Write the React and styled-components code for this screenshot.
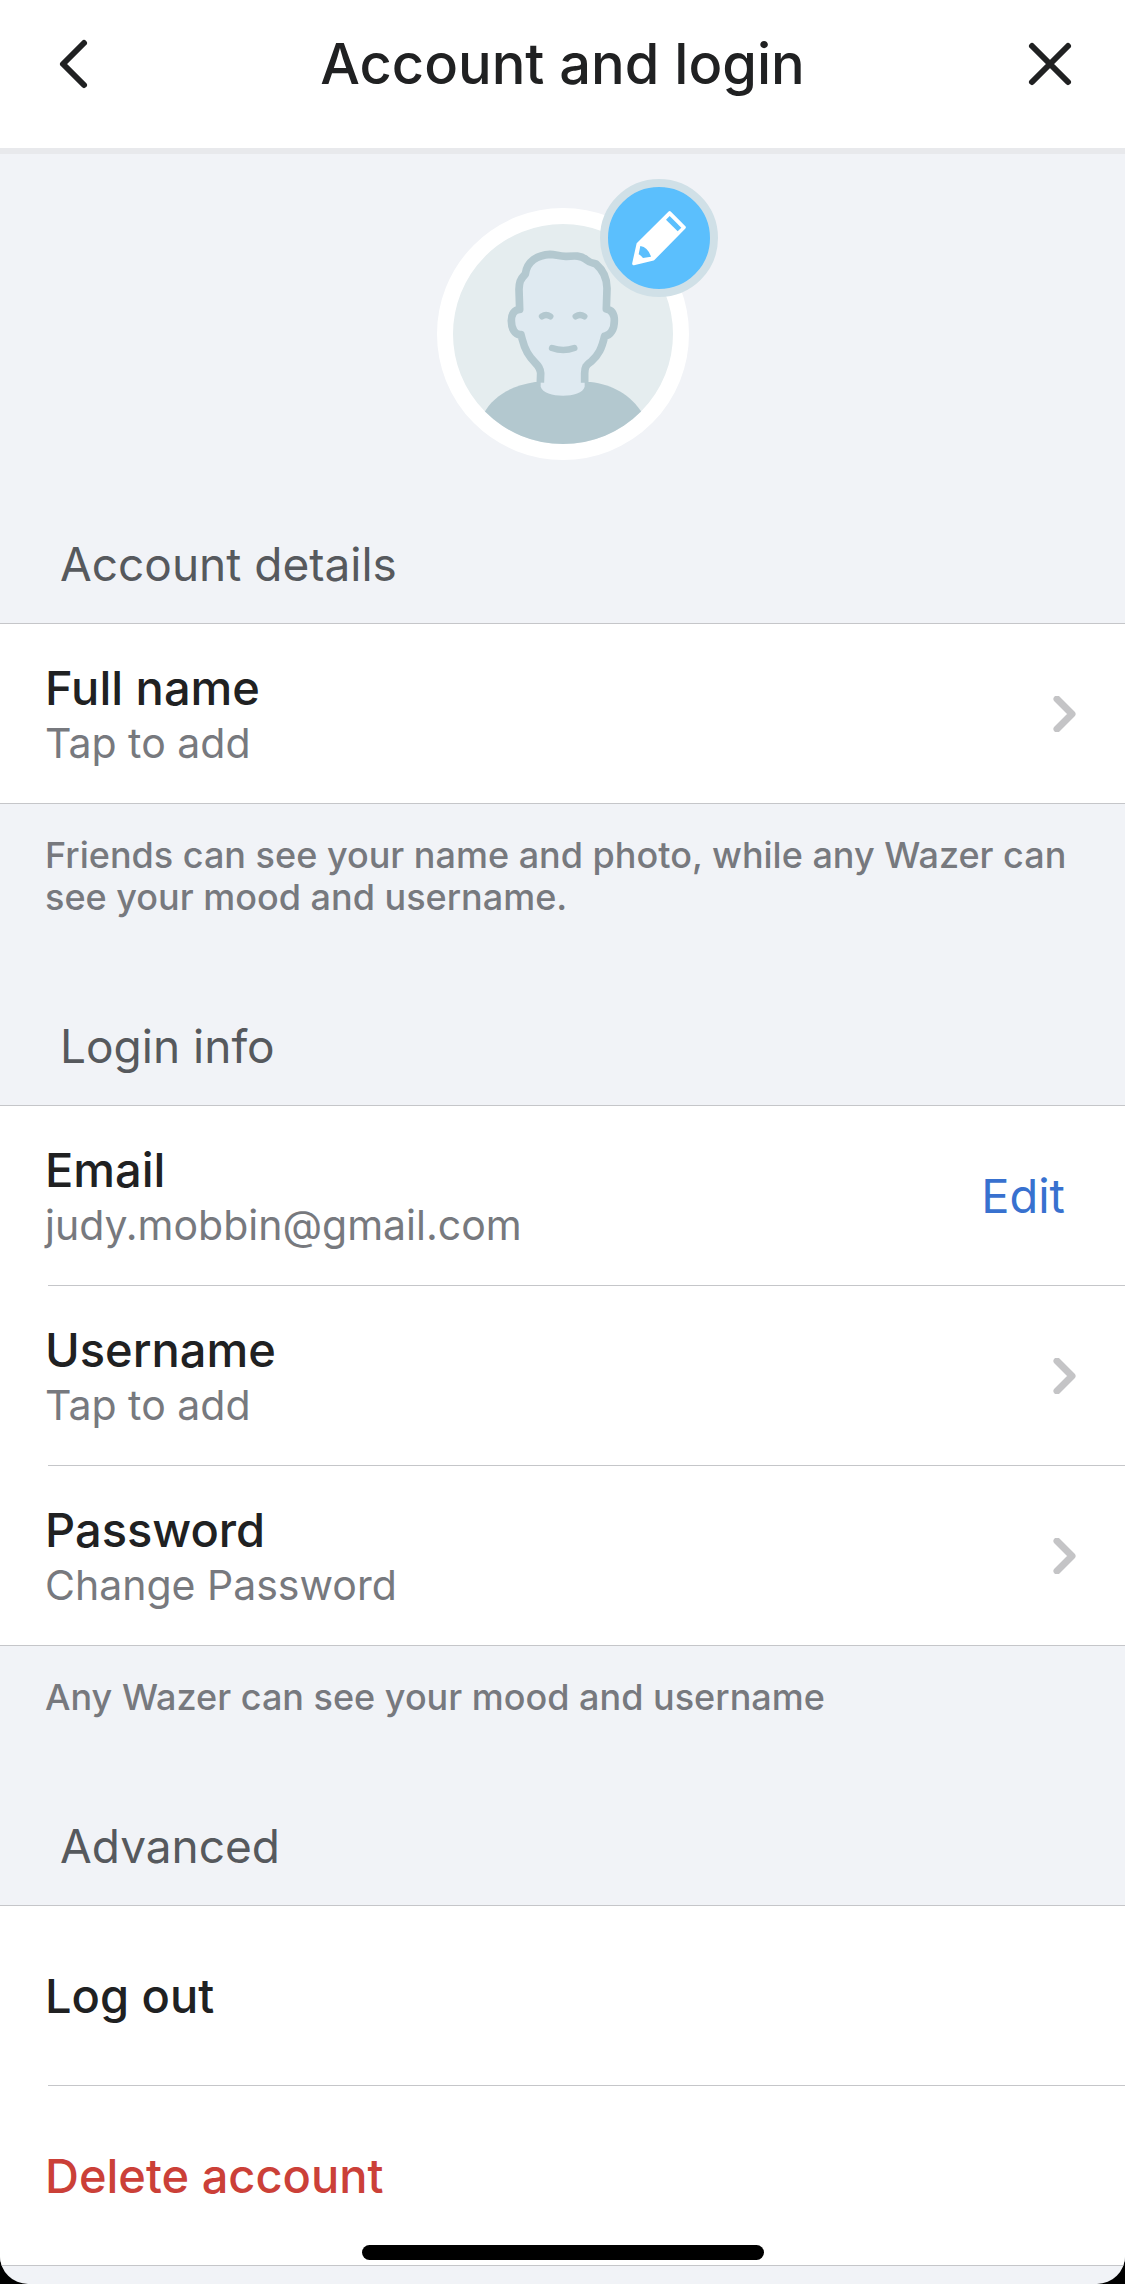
import React from 'react';
import styled, { createGlobalStyle } from 'styled-components';

const GlobalStyle = createGlobalStyle`
  * {
    box-sizing: border-box;
  }
  body {
    margin: 0;
    background-color: #000;
    font-family: Inter, 'Liberation Sans', sans-serif;
    color: #202122;
  }
  button {
    border: 0;
    padding: 0;
    background: none;
    font: inherit;
    color: inherit;
    cursor: pointer;
  }
`;

const Screen = styled.main`
  min-height: 100vh;
  background-color: #f1f3f7;
  border-radius: 0 0 28px 28px;
  overflow: hidden;
`;

const Header = styled.header`
  display: flex;
  align-items: center;
  justify-content: space-between;
  padding: 28px 48px 48px;
  background-color: #fff;
  border-bottom: 6px solid #e8e9ec;
`;

const Title = styled.h1`
  margin: 0;
  font-size: 56px;
  line-height: 72px;
  font-weight: 500;
`;

const IconButton = styled.button`
  display: flex;
  align-items: center;
  justify-content: center;
  width: 54px;
  height: 72px;
`;

const Profile = styled.div`
  display: flex;
  justify-content: center;
  padding-top: 54px;
`;

const Avatar = styled.div`
  position: relative;
  width: 252px;
  height: 252px;
  border: 16px solid #fff;
  border-radius: 50%;
  background-color: #e5edef;

  > svg {
    display: block;
    border-radius: 50%;
  }
`;

const EditPhoto = styled.button`
  position: absolute;
  top: -45px;
  right: -45px;
  width: 118px;
  height: 118px;
  border: 8px solid #d0e0e7;
  border-radius: 50%;
  background-color: #5bbffd;

  svg {
    display: block;
  }
`;

const SectionTitle = styled.h2`
  margin: 0;
  padding: 76px 60px 31px;
  font-size: 46px;
  line-height: 56px;
  font-weight: 400;
  color: #56595d;
`;

const Group = styled.div`
  background-color: #fff;
  border-top: 1px solid #c5c6c9;
  border-bottom: 1px solid #c5c6c9;
`;

const Divider = styled.hr`
  margin: 0 0 0 48px;
  border: 0;
  height: 1px;
  background-color: #c5c6c9;
`;

const Row = styled.div`
  display: flex;
  align-items: center;
  justify-content: space-between;
  width: 100%;
  min-height: 179px;
  padding: 0 44px 0 45px;
  text-align: left;
`;

const RowText = styled.span`
  display: flex;
  flex-direction: column;
  gap: 2px;
`;

const Label = styled.span`
  font-size: 47px;
  line-height: 56px;
  font-weight: 500;
  color: ${(props) => (props.$danger ? '#cb4038' : '#202122')};
`;

const Value = styled.span`
  font-size: 41px;
  line-height: 50px;
  color: #77797e;
`;

const EditButton = styled.button`
  padding-right: 16px;
  font-size: 47px;
  line-height: 56px;
  color: #3871cf;
`;

const Note = styled.p`
  margin: 0;
  padding: 30px 45px 24px;
  font-size: 36px;
  line-height: 42px;
  font-weight: 500;
  color: #77797e;
`;

const HomeIndicator = styled.div`
  position: fixed;
  bottom: 24px;
  left: 50%;
  width: 402px;
  height: 15px;
  margin-left: -201px;
  border-radius: 8px;
  background-color: #000;
`;

const Chevron = () => (
  <svg width="36" height="36" viewBox="0 0 36 36" fill="none" stroke="#c4c4c6" strokeWidth="7" strokeLinecap="round" strokeLinejoin="round">
    <path d="M12 3 27 18 12 33" />
  </svg>
);

const Person = () => (
  <svg width="220" height="220" viewBox="99 192 660 660">
    {/* Shoulders */}
    <path
      d="M190 762C222 704 276 678 345 666H512C575 674 632 702 668 762V860H190Z"
      fill="#b3c8cf"
    />
    {/* Head and neck */}
    <path
      d="M362 680V640C360 612 342 613 322 578C310 556 309 546 303 524C284 526 274 505 274 482C274 463 283 449 299 448L297 388C298 368 299 360 316 342C321 304 352 285 390 283C408 283 418 290 440 289C466 287 482 286 497 298C510 309 516 309 528 312C549 330 561 355 561 385L559 447C576 450 583 463 583 482C583 507 572 527 554 528C545 566 536 585 514 604C498 615 494 622 494 640V680C486 716 372 716 362 680Z"
      fill="#dfeaf1"
    />
    <path
      d="M361 668L362 640C360 612 342 613 322 578C310 556 309 546 303 524C284 526 274 505 274 482C274 463 283 449 299 448L297 388C298 368 299 360 316 342C321 304 352 285 390 283C408 283 418 290 440 289C466 287 482 286 497 298C510 309 516 309 528 312C549 330 561 355 561 385L559 447C576 450 583 463 583 482C583 507 572 527 554 528C545 566 536 585 514 604C498 615 494 622 494 640V668"
      fill="none"
      stroke="#b3c8cf"
      strokeWidth="23"
      strokeLinejoin="round"
    />
    {/* Eyes and mouth */}
    <path
      d="M366 469Q378 461 391 469M467 469Q480 461 493 469M396 564Q430 576 463 564"
      fill="none"
      stroke="#b3c8cf"
      strokeWidth="19"
      strokeLinecap="round"
    />
  </svg>
);

const Pencil = () => (
  <svg width="102" height="102" viewBox="564 81 306 306">
    <path
      d="M641 311 654 252 749 158 793 202 700 297Z"
      fill="#fff"
      stroke="#fff"
      strokeWidth="9"
      strokeLinejoin="round"
    />
    <path d="M749 168 784 203 773 214 738 179Z" fill="#5bbffd" />
    <path d="M661 258Q684 262 693 290L669 294Q663 286 656 283Z" fill="#5bbffd" />
  </svg>
);

const LinkRow = ({ label, value }) => (
  <Row as="button">
    <RowText>
      <Label>{label}</Label>
      <Value>{value}</Value>
    </RowText>
    <Chevron />
  </Row>
);

const App = () => {
  return (
    <>
      <GlobalStyle />
      <Screen>
        <Header>
          <IconButton aria-label="Back">
            <svg width="54" height="54" viewBox="0 0 54 54" fill="none" stroke="#202122" strokeWidth="6" strokeLinecap="round" strokeLinejoin="round">
              <path d="M36 6 15 27 36 48" />
            </svg>
          </IconButton>
          <Title>Account and login</Title>
          <IconButton aria-label="Close">
            <svg width="54" height="54" viewBox="0 0 54 54" fill="none" stroke="#202122" strokeWidth="6" strokeLinecap="round">
              <path d="M9 9 45 45M45 9 9 45" />
            </svg>
          </IconButton>
        </Header>

        <Profile>
          <Avatar>
            <Person />
            <EditPhoto aria-label="Edit photo">
              <Pencil />
            </EditPhoto>
          </Avatar>
        </Profile>

        <SectionTitle>Account details</SectionTitle>
        <Group>
          <LinkRow label="Full name" value="Tap to add" />
        </Group>
        <Note>
          Friends can see your name and photo, while any Wazer can see your mood and username.
        </Note>

        <SectionTitle>Login info</SectionTitle>
        <Group>
          <Row>
            <RowText>
              <Label>Email</Label>
              <Value>judy.mobbin@gmail.com</Value>
            </RowText>
            <EditButton>Edit</EditButton>
          </Row>
          <Divider />
          <LinkRow label="Username" value="Tap to add" />
          <Divider />
          <LinkRow label="Password" value="Change Password" />
        </Group>
        <Note>Any Wazer can see your mood and username</Note>

        <SectionTitle>Advanced</SectionTitle>
        <Group>
          <Row as="button">
            <Label>Log out</Label>
          </Row>
          <Divider />
          <Row as="button">
            <Label $danger>Delete account</Label>
          </Row>
        </Group>
      </Screen>
      <HomeIndicator />
    </>
  );
};

export default App;
